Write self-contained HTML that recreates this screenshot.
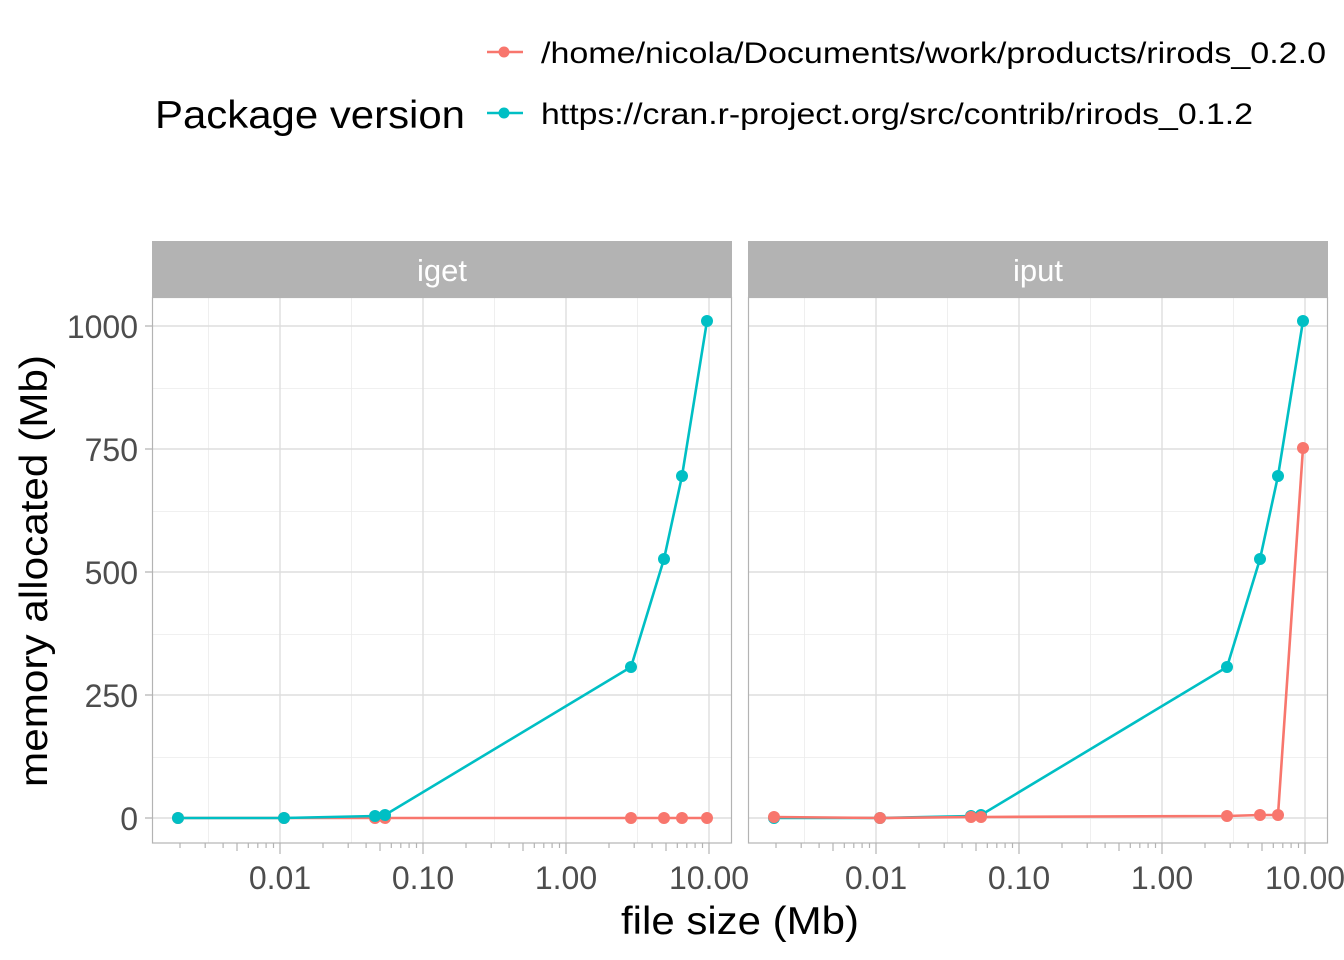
<!DOCTYPE html>
<html><head><meta charset="utf-8"><style>
html,body{margin:0;padding:0;background:#fff;}
svg{display:block;font-family:"Liberation Sans",sans-serif;}
</style></head><body>
<svg width="1344" height="960" viewBox="0 0 1344 960" xmlns="http://www.w3.org/2000/svg">
<rect width="1344" height="960" fill="#fff"/>
<text x="155" y="128" font-size="39" fill="#000" textLength="310" lengthAdjust="spacingAndGlyphs">Package version</text>
<line x1="487" y1="52" x2="523" y2="52" stroke="#F8766D" stroke-width="2.5"/>
<circle cx="504" cy="52" r="5.5" fill="#F8766D"/>
<text x="541" y="63" font-size="30" fill="#000" textLength="785" lengthAdjust="spacingAndGlyphs">/home/nicola/Documents/work/products/rirods_0.2.0</text>
<line x1="487" y1="113" x2="523" y2="113" stroke="#00BFC4" stroke-width="2.5"/>
<circle cx="504" cy="113" r="5.5" fill="#00BFC4"/>
<text x="541" y="124" font-size="30" fill="#000" textLength="712" lengthAdjust="spacingAndGlyphs">https://cran.r-project.org/src/contrib/rirods_0.1.2</text>

<defs>
<g id="panelbg">
  <rect x="152" y="297" width="580" height="546" fill="#fff"/>
  <g stroke="#ebebeb" stroke-width="0.8">
    <line x1="152" x2="732" y1="757.5" y2="757.5"/>
    <line x1="152" x2="732" y1="634.5" y2="634.5"/>
    <line x1="152" x2="732" y1="511.5" y2="511.5"/>
    <line x1="152" x2="732" y1="388.5" y2="388.5"/>
    <line y1="297" y2="843" x1="208.5" x2="208.5"/>
    <line y1="297" y2="843" x1="351.5" x2="351.5"/>
    <line y1="297" y2="843" x1="494.5" x2="494.5"/>
    <line y1="297" y2="843" x1="637.5" x2="637.5"/>
  </g>
  <g stroke="#dedede" stroke-width="1.4">
    <line x1="152" x2="732" y1="818" y2="818"/>
    <line x1="152" x2="732" y1="695" y2="695"/>
    <line x1="152" x2="732" y1="572" y2="572"/>
    <line x1="152" x2="732" y1="449" y2="449"/>
    <line x1="152" x2="732" y1="326" y2="326"/>
    <line y1="297" y2="843" x1="280" x2="280"/>
    <line y1="297" y2="843" x1="423" x2="423"/>
    <line y1="297" y2="843" x1="566" x2="566"/>
    <line y1="297" y2="843" x1="709" x2="709"/>
  </g>
  <rect x="152.5" y="297.5" width="579" height="545.5" fill="none" stroke="#b3b3b3" stroke-width="1.2"/>
  <rect x="152" y="241" width="580" height="56" fill="#b3b3b3"/>
  <g stroke="#b3b3b3" stroke-width="1.2">
    <path d="M280 843v11M423 843v11M566 843v11M709 843v11
    M237 843v8M380 843v8M523 843v8M666 843v8
    M180 843v5M205.2 843v5M223.1 843v5M248.3 843v5M257.8 843v5M266.1 843v5M273.5 843v5
    M323 843v5M348.2 843v5M366.1 843v5M391.3 843v5M400.8 843v5M409.1 843v5M416.5 843v5
    M466 843v5M491.2 843v5M509.1 843v5M534.3 843v5M543.8 843v5M552.1 843v5M559.5 843v5
    M609 843v5M634.2 843v5M652.1 843v5M677.3 843v5M686.8 843v5M695.1 843v5M702.5 843v5"/>
  </g>
  <g font-size="32" fill="#4d4d4d" text-anchor="middle">
    <text x="280" y="889">0.01</text>
    <text x="423" y="889">0.10</text>
    <text x="566" y="889">1.00</text>
    <text x="709" y="889">10.00</text>
  </g>
</g>
</defs>
<use href="#panelbg"/>
<use href="#panelbg" transform="translate(596,0)"/>

<text x="442" y="281" font-size="31" fill="#fff" text-anchor="middle">iget</text>
<text x="1038" y="281" font-size="31" fill="#fff" text-anchor="middle">iput</text>

<g stroke="#b3b3b3" stroke-width="1.2">
  <path d="M145 818h7M145 695h7M145 572h7M145 449h7M145 326h7"/>
</g>
<g font-size="32" fill="#4d4d4d" text-anchor="end">
  <text x="138" y="830">0</text>
  <text x="138" y="707">250</text>
  <text x="138" y="584">500</text>
  <text x="138" y="461">750</text>
  <text x="138" y="338">1000</text>
</g>

<g fill="none" stroke-width="2.6">
  <polyline stroke="#F8766D" points="178,818 284,818 375,818 385,818 631,818 664,818 682,818 707,818"/>
  <polyline stroke="#00BFC4" points="178,818 284,818 375,816 385,815 631,667 664,559 682,476 707,321"/>
</g>
<g fill="#F8766D">
  <circle cx="375" cy="818" r="6"/><circle cx="385" cy="818" r="6"/><circle cx="631" cy="818" r="6"/><circle cx="664" cy="818" r="6"/><circle cx="682" cy="818" r="6"/><circle cx="707" cy="818" r="6"/>
  <circle cx="178" cy="818" r="6"/><circle cx="284" cy="818" r="6"/>
</g>
<g fill="#00BFC4">
  <circle cx="178" cy="818" r="6"/><circle cx="284" cy="818" r="6"/><circle cx="375" cy="816" r="6"/><circle cx="385" cy="815" r="6"/><circle cx="631" cy="667" r="6"/><circle cx="664" cy="559" r="6"/><circle cx="682" cy="476" r="6"/><circle cx="707" cy="321" r="6"/>
</g>

<g fill="none" stroke-width="2.6">
  <polyline stroke="#00BFC4" points="774,818 880,818 971,816 981,815 1227,667 1260,559 1278,476 1303,321"/>
  <polyline stroke="#F8766D" points="774,817 880,818 971,817 981,817 1227,816 1260,815 1278,815 1303,448"/>
</g>
<g fill="#00BFC4">
  <circle cx="774" cy="818" r="6"/><circle cx="880" cy="818" r="6"/><circle cx="971" cy="816" r="6"/><circle cx="981" cy="815" r="6"/><circle cx="1227" cy="667" r="6"/><circle cx="1260" cy="559" r="6"/><circle cx="1278" cy="476" r="6"/><circle cx="1303" cy="321" r="6"/>
</g>
<g fill="#F8766D">
  <circle cx="774" cy="817" r="6"/><circle cx="880" cy="818" r="6"/><circle cx="971" cy="817" r="6"/><circle cx="981" cy="817" r="6"/><circle cx="1227" cy="816" r="6"/><circle cx="1260" cy="815" r="6"/><circle cx="1278" cy="815" r="6"/><circle cx="1303" cy="448" r="6"/>
</g>

<text x="740" y="934" font-size="39" fill="#000" text-anchor="middle" textLength="238" lengthAdjust="spacingAndGlyphs">file size (Mb)</text>
<text transform="translate(47,571) rotate(-90)" font-size="39" fill="#000" text-anchor="middle" textLength="432" lengthAdjust="spacingAndGlyphs">memory allocated (Mb)</text>
</svg>
</body></html>
